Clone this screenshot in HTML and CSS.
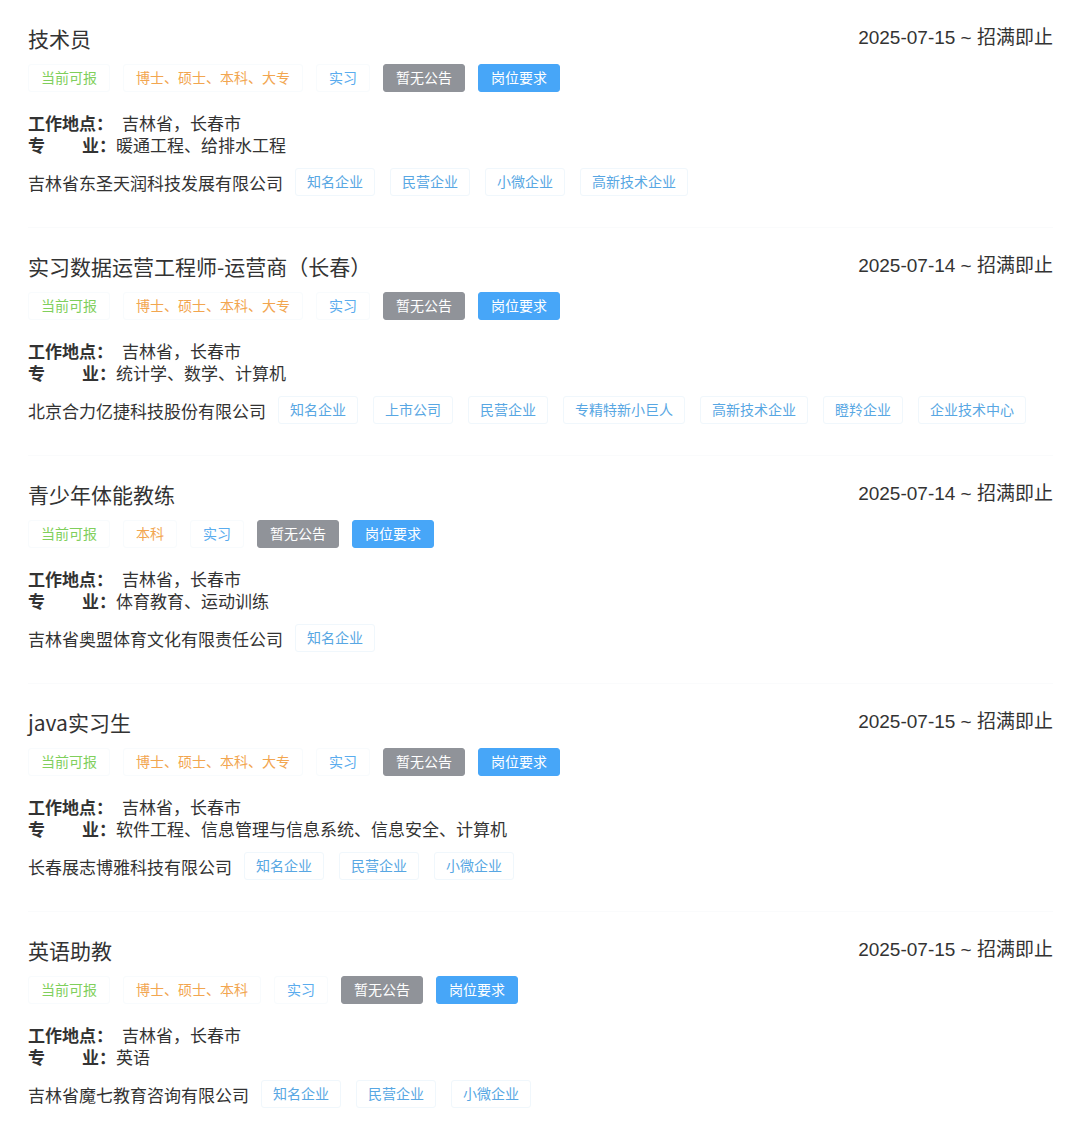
FILE: index.html
```html
<!DOCTYPE html>
<html lang="zh">
<head>
<meta charset="utf-8">
<link rel="stylesheet" href="styles.css">
</head>
<body>
<div class="list">

  <div class="card">
    <div class="head"><div class="title">技术员</div><div class="date">2025-07-15 ~ 招满即止</div></div>
    <div class="tags">
      <span class="tag green">当前可报</span>
      <span class="tag orange">博士、硕士、本科、大专</span>
      <span class="tag blue">实习</span>
      <span class="tag gray">暂无公告</span>
      <span class="tag primary">岗位要求</span>
    </div>
    <div class="info">
      <div class="line"><b class="label">工作地点：</b><span>吉林省，长春市</span></div>
      <div class="line"><b class="label">专<i></i>业：</b><span>暖通工程、给排水工程</span></div>
    </div>
    <div class="company">
      <span class="cname">吉林省东圣天润科技发展有限公司</span>
      <span class="ctag">知名企业</span><span class="ctag">民营企业</span><span class="ctag">小微企业</span><span class="ctag">高新技术企业</span>
    </div>
  </div>

  <div class="card">
    <div class="head"><div class="title">实习数据运营工程师-运营商（长春）</div><div class="date">2025-07-14 ~ 招满即止</div></div>
    <div class="tags">
      <span class="tag green">当前可报</span>
      <span class="tag orange">博士、硕士、本科、大专</span>
      <span class="tag blue">实习</span>
      <span class="tag gray">暂无公告</span>
      <span class="tag primary">岗位要求</span>
    </div>
    <div class="info">
      <div class="line"><b class="label">工作地点：</b><span>吉林省，长春市</span></div>
      <div class="line"><b class="label">专<i></i>业：</b><span>统计学、数学、计算机</span></div>
    </div>
    <div class="company">
      <span class="cname">北京合力亿捷科技股份有限公司</span>
      <span class="ctag">知名企业</span><span class="ctag">上市公司</span><span class="ctag">民营企业</span><span class="ctag">专精特新小巨人</span><span class="ctag">高新技术企业</span><span class="ctag">瞪羚企业</span><span class="ctag">企业技术中心</span>
    </div>
  </div>

  <div class="card">
    <div class="head"><div class="title">青少年体能教练</div><div class="date">2025-07-14 ~ 招满即止</div></div>
    <div class="tags">
      <span class="tag green">当前可报</span>
      <span class="tag orange">本科</span>
      <span class="tag blue">实习</span>
      <span class="tag gray">暂无公告</span>
      <span class="tag primary">岗位要求</span>
    </div>
    <div class="info">
      <div class="line"><b class="label">工作地点：</b><span>吉林省，长春市</span></div>
      <div class="line"><b class="label">专<i></i>业：</b><span>体育教育、运动训练</span></div>
    </div>
    <div class="company">
      <span class="cname">吉林省奥盟体育文化有限责任公司</span>
      <span class="ctag">知名企业</span>
    </div>
  </div>

  <div class="card">
    <div class="head"><div class="title">java实习生</div><div class="date">2025-07-15 ~ 招满即止</div></div>
    <div class="tags">
      <span class="tag green">当前可报</span>
      <span class="tag orange">博士、硕士、本科、大专</span>
      <span class="tag blue">实习</span>
      <span class="tag gray">暂无公告</span>
      <span class="tag primary">岗位要求</span>
    </div>
    <div class="info">
      <div class="line"><b class="label">工作地点：</b><span>吉林省，长春市</span></div>
      <div class="line"><b class="label">专<i></i>业：</b><span>软件工程、信息管理与信息系统、信息安全、计算机</span></div>
    </div>
    <div class="company">
      <span class="cname">长春展志博雅科技有限公司</span>
      <span class="ctag">知名企业</span><span class="ctag">民营企业</span><span class="ctag">小微企业</span>
    </div>
  </div>

  <div class="card">
    <div class="head"><div class="title">英语助教</div><div class="date">2025-07-15 ~ 招满即止</div></div>
    <div class="tags">
      <span class="tag green">当前可报</span>
      <span class="tag orange">博士、硕士、本科</span>
      <span class="tag blue">实习</span>
      <span class="tag gray">暂无公告</span>
      <span class="tag primary">岗位要求</span>
    </div>
    <div class="info">
      <div class="line"><b class="label">工作地点：</b><span>吉林省，长春市</span></div>
      <div class="line"><b class="label">专<i></i>业：</b><span>英语</span></div>
    </div>
    <div class="company">
      <span class="cname">吉林省魔七教育咨询有限公司</span>
      <span class="ctag">知名企业</span><span class="ctag">民营企业</span><span class="ctag">小微企业</span>
    </div>
  </div>

</div>
</body>
</html>
```

FILE: styles.css
```css
* { box-sizing: border-box; }
html, body { margin: 0; padding: 0; background: #fff; }
body {
  font-family: "Noto Sans CJK SC", "Liberation Sans", sans-serif;
  color: #333;
}
.list { padding: 0 27px 0 28px; }
.card {
  height: 228px;
  padding-top: 24px;
  border-bottom: 1px solid #fafbfc;
}
.head {
  display: flex;
  justify-content: space-between;
  align-items: center;
  height: 28px;
}
.title { font-size: 21px; color: #333; line-height: 28px; }
.date {
  font-family: "Liberation Sans", "Noto Sans CJK SC", sans-serif;
  font-size: 19px; color: #333; line-height: 28px;
  margin-right: 0;
  padding-left: 4px;
}
.tags {
  display: flex;
  gap: 13px;
  margin-top: 12px;
}
.tag {
  height: 28px;
  line-height: 25px;
  padding: 0 12px;
  font-size: 14px;
  border-radius: 3px;
  border: 1px solid #f8fbfd;
}
.green { color: #80cf5c; }
.orange { color: #f2a650; }
.blue { color: #5aacee; }
.gray { background: #909399; color: #fff; border-color: #909399; }
.primary { background: #47a6f8; color: #fff; border-color: #47a6f8; }
.info { margin-top: 20px; font-size: 17px; line-height: 22px; }
.line { display: flex; }
.label { font-weight: bold; width: 94px; display: flex; flex: none; }
.label i { width: 37px; flex: none; }
.line .label:has(i) { width: 88px; }
.company {
  display: flex;
  align-items: center;
  gap: 15px;
  margin-top: 12px;
  height: 28px;
}
.cname { font-size: 17px; margin-right: -3px; }
.ctag {
  height: 28px;
  line-height: 25px;
  padding: 0 11px;
  font-size: 14px;
  color: #58a7e3;
  border: 1px solid #f0f7fc;
  border-radius: 3px;
}
```
